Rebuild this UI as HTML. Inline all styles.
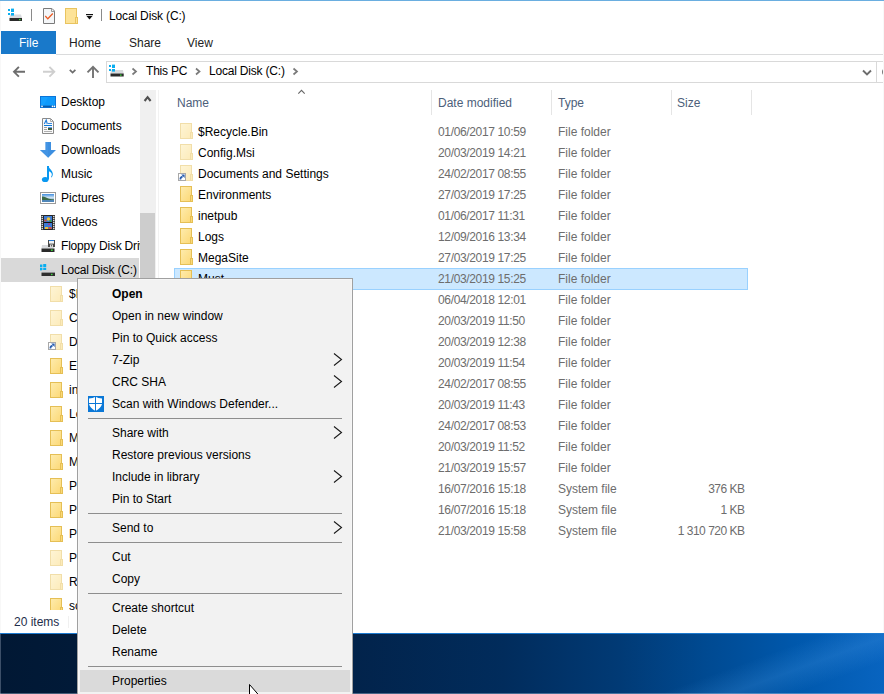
<!DOCTYPE html>
<html><head><meta charset="utf-8">
<style>
*{box-sizing:border-box;margin:0;padding:0}
html,body{width:884px;height:694px;overflow:hidden;background:#fff;font-family:"Liberation Sans",sans-serif;font-size:12px;color:#000}
.a{position:absolute}
.t{position:absolute;white-space:nowrap;line-height:14px}
svg{position:absolute;overflow:visible}
</style></head><body>
<div class="a" style="left:0;top:0;width:884px;height:633px;background:#fff"></div>
<!-- top border -->
<div class="a" style="left:0;top:0;width:884px;height:1px;background:#6aaee0"></div>
<div class="a" style="left:0;top:1px;width:1px;height:632px;background:#f8f8f8"></div>

<!-- TITLE BAR -->
<div class="a" style="left:883px;top:1px;width:1px;height:632px;background:#f8f8f8;z-index:5"></div>
<svg style="left:0;top:0" width="120" height="30">
 <!-- drive icon -->
 <path d="M10 14.5 H21 L22 18 H9.5 Z" fill="#d8dadd"/>
 <rect x="8" y="9" width="2" height="2" fill="#0aaef0"/><rect x="11" y="8.6" width="3" height="3.4" fill="#0aaef0"/>
 <rect x="8" y="13" width="2" height="2" fill="#0aaef0"/><rect x="11" y="13" width="3" height="2.6" fill="#0aaef0"/>
 <rect x="9.5" y="18" width="12.5" height="3" fill="#2a2a2a"/>
 <rect x="19" y="19" width="1.6" height="1.2" fill="#3de03d"/>
 <rect x="31" y="9" width="1" height="12" fill="#8a8a8a"/>
 <!-- doc icon -->
 <path d="M43.5 8.5 H52 L54.5 11 V23.5 H43.5 Z" fill="#f4f6f8" stroke="#7a7a7a" stroke-width="1"/>
 <path d="M51.5 8.5 V11.5 H54.5" fill="none" stroke="#9a9a9a" stroke-width="1"/>
 <path d="M45.3 16 L47.8 18.8 L52.8 13.5" fill="none" stroke="#ea5a22" stroke-width="1.25"/>
 <!-- folder icon -->
 <rect x="65.5" y="8.5" width="11" height="15" fill="#fde398" stroke="#e9c45f" stroke-width="1"/>
 <rect x="75.5" y="17.5" width="2" height="6" fill="#fde398" stroke="#e9c45f" stroke-width="1"/>
 <!-- dropdown -->
 <rect x="86" y="14" width="7" height="1.2" fill="#111"/>
 <path d="M86.5 16 H92.5 L89.5 19.5 Z" fill="#111"/>
 <rect x="101" y="9" width="1" height="12" fill="#8a8a8a"/>
</svg>
<div class="t" style="left:109px;top:9px;color:#000;letter-spacing:-0.15px">Local Disk (C:)</div>

<!-- RIBBON TABS -->
<div class="a" style="left:1px;top:31px;width:55px;height:23px;background:#1979ca"></div>
<div class="t" style="left:19px;top:36px;color:#fff">File</div>
<div class="t" style="left:69px;top:36px;color:#222">Home</div>
<div class="t" style="left:129px;top:36px;color:#222">Share</div>
<div class="t" style="left:187px;top:36px;color:#222">View</div>
<div class="a" style="left:56px;top:54px;width:828px;height:1px;background:#dadbdc"></div>

<!-- ADDRESS ROW -->
<svg style="left:0;top:55px" width="884" height="30">
 <!-- back -->
 <path d="M14 16.8 H25 M18.9 11.9 L14 16.8 L18.9 21.7" fill="none" stroke="#6d6d6d" stroke-width="1.9"/>
 <!-- forward -->
 <path d="M43 16.8 H54 M49.4 11.9 L54.3 16.8 L49.4 21.7" fill="none" stroke="#cfcfcf" stroke-width="1.9"/>
 <!-- dropdown -->
 <path d="M69.8 14.8 L72.6 17.6 L75.4 14.8" fill="none" stroke="#6d6d6d" stroke-width="1.7"/>
 <!-- up -->
 <path d="M93 23 V11.8 M87.5 17.3 L93 11.8 L98.5 17.3" fill="none" stroke="#737373" stroke-width="1.9"/>
 <!-- address box -->
 <rect x="106.5" y="6.5" width="790" height="21" fill="#fff" stroke="#d9d9d9" stroke-width="1"/>
 <rect x="876" y="7" width="1" height="20" fill="#d9d9d9"/>
 <!-- drive icon -->
 <path d="M111 15 H123 L123.7 18.5 H110.5 Z" fill="#d8dadd"/>
 <rect x="109" y="10" width="2" height="2" fill="#0aaef0"/><rect x="112" y="9.6" width="3" height="3.4" fill="#0aaef0"/>
 <rect x="109" y="14" width="2" height="2" fill="#0aaef0"/><rect x="112" y="14" width="3" height="2.6" fill="#0aaef0"/>
 <rect x="110.5" y="18.5" width="13.2" height="3" fill="#2a2a2a"/>
 <rect x="120" y="19.5" width="1.6" height="1.2" fill="#3de03d"/>
 <!-- chevrons -->
 <path d="M132.5 13.5 L136 16.5 L132.5 19.5" fill="none" stroke="#7a7a7a" stroke-width="1.7"/>
 <path d="M196 13.5 L199.5 16.5 L196 19.5" fill="none" stroke="#7a7a7a" stroke-width="1.7"/>
 <path d="M293.5 13.5 L297 16.5 L293.5 19.5" fill="none" stroke="#7a7a7a" stroke-width="1.7"/>
 <!-- dropdown chevron right -->
 <path d="M863 15.5 L867 19.5 L871 15.5" fill="none" stroke="#6d6d6d" stroke-width="1.9"/>
 <!-- refresh partial -->
 <circle cx="886.5" cy="17" r="3.8" fill="none" stroke="#7a7a7a" stroke-width="1.5"/>
</svg>
<div class="t" style="left:146px;top:64px;color:#000;letter-spacing:-0.2px">This PC</div>
<div class="t" style="left:209px;top:64px;color:#000;letter-spacing:-0.2px">Local Disk (C:)</div>

<!-- NAV PANE -->
<svg width="0" height="0" style="position:absolute">
 <defs>
  <linearGradient id="fg" x1="0" y1="0" x2="1" y2="1"><stop offset="0" stop-color="#feecae"/><stop offset="1" stop-color="#fcd875"/></linearGradient>
  <g id="fold">
   <rect x="0.5" y="0.5" width="11" height="15" fill="url(#fg)" stroke="#e5bf55" stroke-width="1"/>
   <rect x="10.5" y="9.5" width="2" height="6" fill="#fbd978" stroke="#e5bf55" stroke-width="1"/>
  </g>
 </defs>
</svg>
<div class="a" style="left:1px;top:258px;width:138px;height:24px;background:#d9d9d9"></div>
<!-- scrollbar -->
<div class="a" style="left:140px;top:90px;width:16px;height:520px;background:#f0f0f0"></div>
<div class="a" style="left:140px;top:213px;width:15px;height:200px;background:#cdcdcd"></div>
<div class="a" style="left:158px;top:90px;width:1px;height:520px;background:#f2f2f2"></div>
<svg style="left:140px;top:90px" width="16" height="16"><path d="M4.6 11 L7.6 7.2 L10.6 11" fill="none" stroke="#505050" stroke-width="2.1"/></svg>
<svg style="left:0;top:90px;overflow:hidden" width="140" height="520">
 <!-- Desktop -->
 <g transform="translate(40,6)">
  <rect x="0.5" y="0.5" width="15" height="11" fill="#16a0ff" stroke="#0b74d8"/>
  <path d="M8 1 H15 V11 H3 Z" fill="#0a96fa" opacity=".6"/>
  <rect x="1" y="9.6" width="14" height="1.6" fill="#0a5cae"/>
  <circle cx="2" cy="10.4" r=".8" fill="#fff"/><circle cx="12.5" cy="10.4" r=".8" fill="#fff"/><circle cx="14.4" cy="10.4" r=".8" fill="#fff"/>
 </g>
 <!-- Documents -->
 <g transform="translate(42,28)">
  <path d="M0.5 0.5 H8.5 L11.5 3.5 V15.5 H0.5 Z" fill="#fafafa" stroke="#8a8a8a"/>
  <path d="M8.5 0.5 V3.5 H11.5" fill="none" stroke="#aaa"/>
  <path d="M2.3 6 L4.2 2 L5.3 6" fill="none" stroke="#1e7ad8" stroke-width="1.1"/>
  <rect x="6" y="5" width="4" height="1" fill="#3a8ae0"/>
  <rect x="2" y="7" width="8" height="1" fill="#0a78d8"/>
  <rect x="2" y="9" width="3" height="1" fill="#a0a0a0"/><rect x="6" y="9" width="4" height="1" fill="#5a9af0"/>
  <rect x="2" y="11" width="3" height="1" fill="#a0a0a0"/><rect x="6" y="10" width="4" height="2" fill="#3a5a3a"/>
  <rect x="2" y="13" width="8" height="1" fill="#b0b0b0"/>
 </g>
 <!-- Downloads -->
 <path d="M45.5 52 H51 V60 H56 L48.2 67.8 L40 60 H45.5 Z" fill="#3d8fe0"/><path d="M45.5 52 H48.2 V67.8 L40 60 H45.5 Z" fill="#4a9ae8" opacity=".5"/>
 <!-- Music -->
 <g transform="translate(41,76)" fill="#0a98f0">
  <ellipse cx="4.2" cy="13.5" rx="3.3" ry="2.6"/>
  <rect x="6" y="0" width="2" height="13.5"/>
  <path d="M7.5 0.5 C8.5 3 11.5 4.5 11.8 7.5 C12 9.5 11 11 10.5 11.5 L10 11 C10.8 9.8 11 8.8 10.6 7.6 C10 6 8.8 5.4 7.5 5.2 Z"/>
 </g>
 <!-- Pictures -->
 <g transform="translate(40,102)">
  <rect x="0.5" y="0.5" width="15" height="11" fill="#fff" stroke="#9a9a9a"/>
  <linearGradient id="pg" x1="0" y1="0" x2="0" y2="1"><stop offset="0" stop-color="#3f8de0"/><stop offset=".45" stop-color="#cfe3f0"/><stop offset="1" stop-color="#4a7fb0"/></linearGradient>
  <rect x="2" y="2" width="12" height="8" fill="url(#pg)"/>
  <path d="M2 4.5 C4 4 6 5.5 9 6.8 C11 7.3 13 7.2 14 7.4 V8 H2 Z" fill="#3b6a48"/>
  <rect x="2" y="8" width="12" height="2" fill="#4f86b8"/>
 </g>
 <!-- Videos -->
 <g transform="translate(41,125)">
  <rect x="0" y="0" width="14" height="15" fill="#3a3a3a"/>
  <rect x="2.5" y="0.5" width="9" height="14" fill="#111"/>
  <rect x="3" y="1" width="8" height="6" fill="#3d7bd6"/><rect x="3" y="8" width="8" height="6" fill="#3d7bd6"/>
  <circle cx="7.5" cy="4" r="1.8" fill="#e8c23a"/><rect x="3.5" y="4.5" width="2" height="2" fill="#d84a3a"/><rect x="8.5" y="5" width="2" height="2" fill="#3a9a4a"/>
  <rect x="7" y="8.5" width="2" height="1.5" fill="#b03a8a"/><rect x="4" y="12" width="3" height="2" fill="#e8c23a"/><rect x="7.5" y="12" width="3" height="2" fill="#d8503a"/>
  <g fill="#fff"><rect x="0.6" y="1" width="1.2" height="1.2"/><rect x="0.6" y="3" width="1.2" height="1.2"/><rect x="0.6" y="5" width="1.2" height="1.2"/><rect x="0.6" y="7" width="1.2" height="1.2"/><rect x="0.6" y="9" width="1.2" height="1.2"/><rect x="0.6" y="11" width="1.2" height="1.2"/><rect x="0.6" y="13" width="1.2" height="1.2"/>
  <rect x="12.2" y="1" width="1.2" height="1.2"/><rect x="12.2" y="3" width="1.2" height="1.2"/><rect x="12.2" y="5" width="1.2" height="1.2"/><rect x="12.2" y="7" width="1.2" height="1.2"/><rect x="12.2" y="9" width="1.2" height="1.2"/><rect x="12.2" y="11" width="1.2" height="1.2"/><rect x="12.2" y="13" width="1.2" height="1.2"/></g>
 </g>
 <!-- Floppy -->
 <g transform="translate(0,90) translate(0,-90)">
  <path d="M42 155 H53.5 L54.5 158.5 H41.5 Z" fill="#d8dadd"/>
  <rect x="48" y="150" width="7" height="7" fill="#4a4a4a"/>
  <rect x="49" y="150" width="5" height="3.6" fill="#f2f2f2"/><rect x="49" y="150" width="5" height="1" fill="#2a7ad0"/>
  <rect x="50" y="154.5" width="3" height="2.5" fill="#d8d8d8"/><rect x="51" y="155.3" width="1" height="1" fill="#333"/>
  <rect x="41.5" y="158.5" width="13" height="3.5" fill="#2a2a2a"/>
  <rect x="51" y="159.5" width="1.7" height="1.4" fill="#3de03d"/>
 </g>
 <!-- Local Disk -->
 <g transform="translate(40,174)">
  <rect x="0" y="0.5" width="2.4" height="2.6" fill="#0aaef0"/><rect x="3.2" y="0" width="3" height="3.1" fill="#0aaef0"/>
  <rect x="0" y="3.8" width="2.4" height="2.6" fill="#0aaef0"/><rect x="3.2" y="3.8" width="3" height="3.1" fill="#0aaef0"/>
  <path d="M2 6 H14 L15 8.6 H1.5 Z" fill="#d0d2d5"/>
  <rect x="1.5" y="8.6" width="13.5" height="3.4" fill="#2e2e2e"/>
  <rect x="11" y="9.8" width="1.5" height="1.3" fill="#3de03d"/>
 </g>
 <!-- sub folders -->
 <use href="#fold" x="50" y="196" opacity=".5"/>
 <use href="#fold" x="50" y="220" opacity=".5"/>
 <use href="#fold" x="50" y="244" opacity=".5"/>
 <use href="#fold" x="50" y="268"/>
 <use href="#fold" x="50" y="292"/>
 <use href="#fold" x="50" y="316"/>
 <use href="#fold" x="50" y="340"/>
 <use href="#fold" x="50" y="364"/>
 <use href="#fold" x="50" y="388"/>
 <use href="#fold" x="50" y="412"/>
 <use href="#fold" x="50" y="436"/>
 <use href="#fold" x="50" y="460" opacity=".5"/>
 <use href="#fold" x="50" y="484" opacity=".5"/>
 <use href="#fold" x="50" y="508"/>
 <!-- shortcut overlay -->
 <rect x="48.5" y="252.5" width="7" height="7" fill="#fff" stroke="#a8a8a8"/><path d="M50.4 258.5 Q50.2 256 52.6 255.6" fill="none" stroke="#2a5fb0" stroke-width="1.7"/><path d="M51.2 253.4 L54.6 253.4 L54.6 257 Z" fill="#2a5fb0"/>
</svg>
<div class="a" style="left:0;top:90px;width:140px;height:520px;overflow:hidden">
 <div class="t" style="left:61px;top:5px">Desktop</div>
 <div class="t" style="left:61px;top:29px">Documents</div>
 <div class="t" style="left:61px;top:53px">Downloads</div>
 <div class="t" style="left:61px;top:77px">Music</div>
 <div class="t" style="left:61px;top:101px">Pictures</div>
 <div class="t" style="left:61px;top:125px">Videos</div>
 <div class="t" style="left:61px;top:149px;letter-spacing:-0.2px">Floppy Disk Drive (A:)</div>
 <div class="t" style="left:61px;top:173px;letter-spacing:-0.2px">Local Disk (C:)</div>
 <div class="t" style="left:69px;top:197px">$Recycle.Bin</div>
 <div class="t" style="left:69px;top:221px">Config.Msi</div>
 <div class="t" style="left:69px;top:245px">Documents and Settings</div>
 <div class="t" style="left:69px;top:269px">Environments</div>
 <div class="t" style="left:69px;top:293px">inetpub</div>
 <div class="t" style="left:69px;top:317px">Logs</div>
 <div class="t" style="left:69px;top:341px">MegaSite</div>
 <div class="t" style="left:69px;top:365px">Must</div>
 <div class="t" style="left:69px;top:389px">PerfLogs</div>
 <div class="t" style="left:69px;top:413px">Program Files</div>
 <div class="t" style="left:69px;top:437px">Program Files (x86)</div>
 <div class="t" style="left:69px;top:461px">ProgramData</div>
 <div class="t" style="left:69px;top:485px">Recovery</div>
 <div class="t" style="left:69px;top:509px">scripts</div>
</div>

<!-- CONTENT -->
<style>
.nm{left:198px;color:#000}
.dt{left:438px;color:#6d6d6d;letter-spacing:-0.35px}
.ty{left:558px;color:#6d6d6d}
.sz{right:140px;color:#6d6d6d;text-align:right;letter-spacing:-0.5px;margin-right:-0.5px}
.hd{top:96px;color:#4c607a}
</style>
<div class="a" style="left:174px;top:268px;width:574px;height:22px;background:#cce8ff;border:1px solid #99d1ff"></div>
<div class="a" style="left:431px;top:90px;width:1px;height:25px;background:#e5e5e5"></div>
<div class="a" style="left:551px;top:90px;width:1px;height:25px;background:#e5e5e5"></div>
<div class="a" style="left:671px;top:90px;width:1px;height:25px;background:#e5e5e5"></div>
<div class="a" style="left:751px;top:90px;width:1px;height:25px;background:#e5e5e5"></div>
<svg style="left:296px;top:88px" width="12" height="8"><path d="M2.3 5.6 L5.5 2.4 L8.7 5.6" fill="none" stroke="#666" stroke-width="1.1"/></svg>
<div class="t hd" style="left:177px">Name</div>
<div class="t hd" style="left:438px">Date modified</div>
<div class="t hd" style="left:558px">Type</div>
<div class="t hd" style="left:677px">Size</div>
<svg style="left:0;top:0" width="884" height="633">
 <use href="#fold" x="180" y="123" opacity=".5"/>
 <use href="#fold" x="180" y="144" opacity=".5"/>
 <use href="#fold" x="180" y="165" opacity=".5"/>
 <rect x="178.5" y="173.5" width="7" height="7" fill="#fff" stroke="#a8a8a8"/><path d="M180.4 179.5 Q180.2 177 182.6 176.6" fill="none" stroke="#2a5fb0" stroke-width="1.7"/><path d="M181.2 174.4 L184.6 174.4 L184.6 178 Z" fill="#2a5fb0"/>
 <use href="#fold" x="180" y="186"/>
 <use href="#fold" x="180" y="207"/>
 <use href="#fold" x="180" y="228"/>
 <use href="#fold" x="180" y="249"/>
 <use href="#fold" x="180" y="270"/>
 <use href="#fold" x="180" y="291"/>
 <use href="#fold" x="180" y="312"/>
 <use href="#fold" x="180" y="333"/>
 <use href="#fold" x="180" y="354" opacity=".5"/>
 <use href="#fold" x="180" y="375" opacity=".5"/>
 <use href="#fold" x="180" y="396"/>
 <use href="#fold" x="180" y="417" opacity=".5"/>
 <use href="#fold" x="180" y="438"/>
 <use href="#fold" x="180" y="459"/>
 <g transform="translate(181,480)"><path d="M0.5 0.5 H8 L11.5 4 V15.5 H0.5 Z" fill="#fff" stroke="#9a9a9a"/><rect x="2" y="7" width="8" height="6" fill="#9aa5b5"/></g>
 <g transform="translate(181,501)"><path d="M0.5 0.5 H8 L11.5 4 V15.5 H0.5 Z" fill="#fff" stroke="#9a9a9a"/><rect x="2" y="7" width="8" height="6" fill="#9aa5b5"/></g>
 <g transform="translate(181,522)"><path d="M0.5 0.5 H8 L11.5 4 V15.5 H0.5 Z" fill="#fff" stroke="#9a9a9a"/><rect x="2" y="7" width="8" height="6" fill="#9aa5b5"/></g>
</svg>
 <div class="t nm" style="top:125px">$Recycle.Bin</div><div class="t dt" style="top:125px">01/06/2017 10:59</div><div class="t ty" style="top:125px">File folder</div>
 <div class="t nm" style="top:146px">Config.Msi</div><div class="t dt" style="top:146px">20/03/2019 14:21</div><div class="t ty" style="top:146px">File folder</div>
 <div class="t nm" style="top:167px">Documents and Settings</div><div class="t dt" style="top:167px">24/02/2017 08:55</div><div class="t ty" style="top:167px">File folder</div>
 <div class="t nm" style="top:188px">Environments</div><div class="t dt" style="top:188px">27/03/2019 17:25</div><div class="t ty" style="top:188px">File folder</div>
 <div class="t nm" style="top:209px">inetpub</div><div class="t dt" style="top:209px">01/06/2017 11:31</div><div class="t ty" style="top:209px">File folder</div>
 <div class="t nm" style="top:230px">Logs</div><div class="t dt" style="top:230px">12/09/2016 13:34</div><div class="t ty" style="top:230px">File folder</div>
 <div class="t nm" style="top:251px">MegaSite</div><div class="t dt" style="top:251px">27/03/2019 17:25</div><div class="t ty" style="top:251px">File folder</div>
 <div class="t nm" style="top:272px">Must</div><div class="t dt" style="top:272px">21/03/2019 15:25</div><div class="t ty" style="top:272px">File folder</div>
 <div class="t nm" style="top:293px">PerfLogs</div><div class="t dt" style="top:293px">06/04/2018 12:01</div><div class="t ty" style="top:293px">File folder</div>
 <div class="t nm" style="top:314px">Program Files</div><div class="t dt" style="top:314px">20/03/2019 11:50</div><div class="t ty" style="top:314px">File folder</div>
 <div class="t nm" style="top:335px">Program Files (x86)</div><div class="t dt" style="top:335px">20/03/2019 12:38</div><div class="t ty" style="top:335px">File folder</div>
 <div class="t nm" style="top:356px">ProgramData</div><div class="t dt" style="top:356px">20/03/2019 11:54</div><div class="t ty" style="top:356px">File folder</div>
 <div class="t nm" style="top:377px">Recovery</div><div class="t dt" style="top:377px">24/02/2017 08:55</div><div class="t ty" style="top:377px">File folder</div>
 <div class="t nm" style="top:398px">scripts</div><div class="t dt" style="top:398px">20/03/2019 11:43</div><div class="t ty" style="top:398px">File folder</div>
 <div class="t nm" style="top:419px">System Volume Information</div><div class="t dt" style="top:419px">24/02/2017 08:53</div><div class="t ty" style="top:419px">File folder</div>
 <div class="t nm" style="top:440px">Users</div><div class="t dt" style="top:440px">20/03/2019 11:52</div><div class="t ty" style="top:440px">File folder</div>
 <div class="t nm" style="top:461px">Windows</div><div class="t dt" style="top:461px">21/03/2019 15:57</div><div class="t ty" style="top:461px">File folder</div>
 <div class="t nm" style="top:482px">bootmgr</div><div class="t dt" style="top:482px">16/07/2016 15:18</div><div class="t ty" style="top:482px">System file</div><div class="t sz" style="top:482px">376 KB</div>
 <div class="t nm" style="top:503px">BOOTNXT</div><div class="t dt" style="top:503px">16/07/2016 15:18</div><div class="t ty" style="top:503px">System file</div><div class="t sz" style="top:503px">1 KB</div>
 <div class="t nm" style="top:524px">pagefile.sys</div><div class="t dt" style="top:524px">21/03/2019 15:58</div><div class="t ty" style="top:524px">System file</div><div class="t sz" style="top:524px">1 310 720 KB</div>

<!-- STATUS BAR -->
<div class="t" style="left:14px;top:615px;color:#1e2d4a">20 items</div>
<div class="a" style="left:68px;top:616px;width:1px;height:12px;background:#f0f0f0"></div>

<!-- DESKTOP -->
<div class="a" style="left:0;top:633px;width:884px;height:61px;background:linear-gradient(90deg,#011834 0%,#011e40 25%,#02234b 40%,#012c5c 57%,#013a75 70%,#004a92 80%,#0058ac 90%,#0864c0 100%)"></div>
<div class="a" style="left:640px;top:634px;width:244px;height:60px;background:linear-gradient(160deg,rgba(80,160,235,0) 45%,rgba(80,160,235,.22) 62%,rgba(80,160,235,0) 78%)"></div>
<div class="a" style="left:0;top:633px;width:884px;height:1px;background:#1c7ad0"></div>
<div class="a" style="left:0;top:634px;width:1px;height:60px;background:rgba(200,210,225,.3)"></div>
<div class="a" style="left:0;top:693px;width:884px;height:1px;background:rgba(200,220,240,.35)"></div>
<!-- CONTEXT MENU -->
<div class="a" style="left:77px;top:278px;width:276px;height:416px;background:#f2f2f2;border:1px solid #a0a0a0;border-bottom:none"></div>
<div class="a" style="left:78px;top:279px;width:274px;height:415px;border:1px solid #f6f6f6;border-bottom:none"></div>
<div class="a" style="left:80px;top:670px;width:270px;height:22px;background:#dadada"></div>
<div class="a" style="left:78px;top:693px;width:274px;height:1px;background:#f2f2f2"></div>
<svg style="left:0;top:0" width="884" height="694">
 <rect x="88" y="418" width="254" height="1" fill="#8e8e8e"/>
 <rect x="88" y="513" width="254" height="1" fill="#8e8e8e"/>
 <rect x="88" y="542" width="254" height="1" fill="#8e8e8e"/>
 <rect x="88" y="593" width="254" height="1" fill="#8e8e8e"/>
 <rect x="88" y="666" width="254" height="1" fill="#8e8e8e"/>
 <path d="M334 353.5 L341.5 359.5 L334 365.5" fill="none" stroke="#1a1a1a" stroke-width="1.1"/>
 <path d="M334 375.5 L341.5 381.5 L334 387.5" fill="none" stroke="#1a1a1a" stroke-width="1.1"/>
 <path d="M334 426.5 L341.5 432.5 L334 438.5" fill="none" stroke="#1a1a1a" stroke-width="1.1"/>
 <path d="M334 470.5 L341.5 476.5 L334 482.5" fill="none" stroke="#1a1a1a" stroke-width="1.1"/>
 <path d="M334 521.5 L341.5 527.5 L334 533.5" fill="none" stroke="#1a1a1a" stroke-width="1.1"/>
 <rect x="88" y="396" width="16" height="16" fill="#0b78d7"/>
 <path d="M89 398.6 Q93 398.4 95.5 396.8 Q98 398.4 102 398.6 V404 Q101 408 95.5 411 Q90 408 89 404 Z" fill="#fff"/>
 <rect x="95" y="396" width="1" height="16" fill="#0b78d7"/><rect x="88" y="403" width="16" height="1" fill="#0b78d7"/>
 <path d="M249.5 684.5 L249.5 700 L253 697 L256 703 L258 702 L255.5 696.5 L260 696.5 Z" fill="#fff" stroke="#000" stroke-width="1"/>
</svg>
<div class="t" style="left:112px;top:287px;font-weight:bold;">Open</div>
<div class="t" style="left:112px;top:309px;">Open in new window</div>
<div class="t" style="left:112px;top:331px;">Pin to Quick access</div>
<div class="t" style="left:112px;top:353px;">7-Zip</div>
<div class="t" style="left:112px;top:375px;">CRC SHA</div>
<div class="t" style="left:112px;top:397px;">Scan with Windows Defender...</div>
<div class="t" style="left:112px;top:426px;">Share with</div>
<div class="t" style="left:112px;top:448px;">Restore previous versions</div>
<div class="t" style="left:112px;top:470px;">Include in library</div>
<div class="t" style="left:112px;top:492px;">Pin to Start</div>
<div class="t" style="left:112px;top:521px;">Send to</div>
<div class="t" style="left:112px;top:550px;">Cut</div>
<div class="t" style="left:112px;top:572px;">Copy</div>
<div class="t" style="left:112px;top:601px;">Create shortcut</div>
<div class="t" style="left:112px;top:623px;">Delete</div>
<div class="t" style="left:112px;top:645px;">Rename</div>
<div class="t" style="left:112px;top:674px;">Properties</div>

</body></html>
